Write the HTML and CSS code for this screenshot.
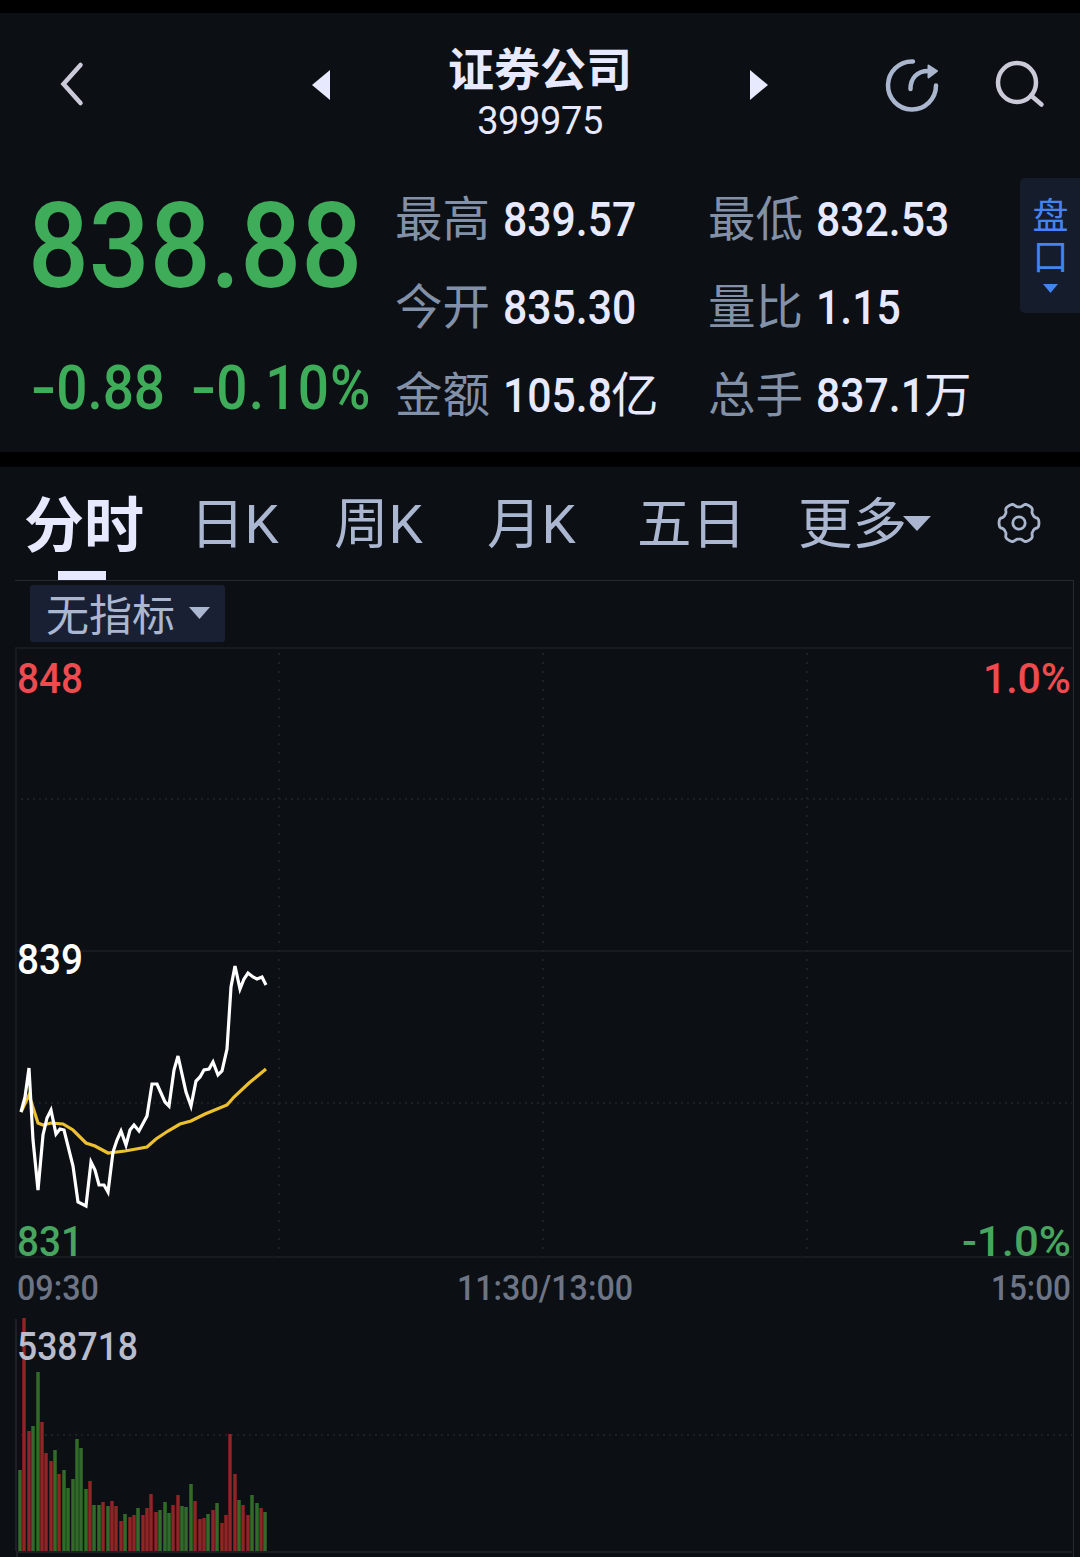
FILE: index.html
```
<!DOCTYPE html>
<html lang="zh-CN">
<head>
    <meta charset="UTF-8">
    <meta name="viewport" content="width=device-width, initial-scale=1.0">
    <title>证券公司 399975</title>
    <link rel="stylesheet" href="styles.css">
</head>
<body>
    <header class="topbar">
        <svg class="back" width="24" height="44" viewBox="0 0 24 44"><path d="M20.500 2L3.500 21L20.500 40"/></svg>
        <svg class="prev" width="18" height="30" viewBox="0 0 18 30"><path d="M18 0V30L0 15Z"/></svg>
        <div class="name">
            <h1>证券公司</h1>
            <span class="code">399975</span>
        </div>
        <svg class="next" width="18" height="30" viewBox="0 0 18 30"><path d="M0 0V30L18 15Z"/></svg>
        <svg class="share" width="56" height="56" viewBox="0 0 56 56">
            <path d="M29 4.500A24 24 0 1 0 52 28.500"/>
            <path d="M26.500 32C26.500 21.500 33 14 44 14"/>
            <path class="tip" d="M44.500 8.500L53 14L44.500 20.500Z"/>
        </svg>
        <svg class="search" width="50" height="50" viewBox="0 0 50 50">
            <ellipse cx="23" cy="22.500" rx="19" ry="19.500"/>
            <path d="M37 35.500L47.500 44.500"/>
        </svg>
    </header>

    <section class="quote">
        <div class="price">
            <div class="last"><span class="num">838.88</span></div>
            <div class="change">
                <span class="num diff"><span class="sign">-</span>0.88</span>
                <span class="num pct"><span class="sign">-</span>0.10%</span>
            </div>
        </div>
        <dl class="stats">
            <div><dt>最高</dt><dd><span class="num">839.57</span></dd></div>
            <div><dt>最低</dt><dd><span class="num">832.53</span></dd></div>
            <div><dt>今开</dt><dd><span class="num">835.30</span></dd></div>
            <div><dt>量比</dt><dd><span class="num">1.15</span></dd></div>
            <div><dt>金额</dt><dd><span class="num">105.8</span>亿</dd></div>
            <div><dt>总手</dt><dd><span class="num">837.1</span>万</dd></div>
        </dl>
        <div class="orders">
            <span>盘口</span>
            <svg width="15" height="9" viewBox="0 0 15 9"><path d="M0 0H15L7.500 9Z"/></svg>
        </div>
    </section>

    <nav class="tabs">
        <a class="active">分时</a>
        <a>日K</a>
        <a>周K</a>
        <a>月K</a>
        <a>五日</a>
        <a class="more">更多<svg width="28" height="15" viewBox="0 0 28 15"><path d="M0 0H28L14 15Z"/></svg></a>
        <svg class="gear" width="44" height="44" viewBox="-22 -22 44 44">
            <path id="gear"/>
            <circle r="6.200"/>
        </svg>
    </nav>

    <main class="panel">
        <div class="indicator">
            <button>无指标<svg width="21" height="12" viewBox="0 0 21 12"><path d="M0 0H21L10.500 12Z"/></svg></button>
        </div>
        <svg class="chart" width="1058" height="911" viewBox="15 646 1058 911">
            <g class="frame">
                <path d="M1072 648H16V1257H1072M16 951H1072"/>
                <path class="strong" d="M16 1319V1551M16 1552H1072M17 1553V1557"/>
            </g>
            <g class="dots">
                <path class="v" d="M279 653V1257M543 653V1257M807 653V1257"/>
                <path class="h" d="M21 799H1072M21 1103H1072M21 1435H1072"/>
            </g>
            <g id="volume"></g>
            <path class="average" d="M21 1112L29 1095L38 1123L43 1125L51 1123L63 1124L73 1130L86 1143L95 1146L108 1153L125 1151L147 1147L156 1139L168 1131L180 1124L191 1121L205 1114L227 1105L234 1097L249 1083L266 1069"/>
            <path class="line" d="M21 1112L25 1097L29 1068L33 1140L38 1190L43 1135L47 1118L51 1110L56 1134L60 1129L64 1130L73 1166L78 1202L86 1206L91 1162L95 1170L99 1185L104 1185L108 1192L113 1152L117 1140L121 1131L126 1145L130 1130L134 1125L139 1131L147 1116L152 1084L157 1084L165 1102L169 1106L174 1070L178 1056L186 1092L191 1106L196 1081L200 1077L204 1070L209 1069L213 1062L218 1075L222 1071L227 1049L231 987L235 966L240 989L244 979L248 973L253 977L257 979L262 977L266 985"/>
            <g class="scale">
                <text class="up" x="17" y="692.500" textLength="66" lengthAdjust="spacingAndGlyphs">848</text>
                <text class="up" x="983" y="692.500" textLength="88" lengthAdjust="spacingAndGlyphs">1.0%</text>
                <text class="mid" x="17" y="973.500" textLength="66" lengthAdjust="spacingAndGlyphs">839</text>
                <text class="down" x="17" y="1255.500" textLength="66" lengthAdjust="spacingAndGlyphs">831</text>
                <text class="down" x="962" y="1255.500" textLength="109" lengthAdjust="spacingAndGlyphs">-1.0%</text>
            </g>
            <g class="time">
                <text x="17" y="1300" textLength="82" lengthAdjust="spacingAndGlyphs">09:30</text>
                <text x="457" y="1300" textLength="176" lengthAdjust="spacingAndGlyphs">11:30/13:00</text>
                <text x="991" y="1300" textLength="80" lengthAdjust="spacingAndGlyphs">15:00</text>
            </g>
            <text class="peak" x="17" y="1360" textLength="121" lengthAdjust="spacingAndGlyphs">538718</text>
        </svg>
    </main>

    <script>
        // one entry per minute: bar height, red (r) or green (g)
        var bars = "81g 233r 120r 125g 179g 129r 98r 90r 101g 77r 81g 63g 72g 112g 103g 62g 70r 46g 46g 49r " +
            "45g 50r 45r 30r 37g 34r 36r 43g 36r 43r 57r 39r 41g 49g 38g 46r 56r 45g 44g 67g 50r 32r 33r " +
            "37g 41r 48g 28r 36r 117r 77r 51g 46r 36r 56g 48g 43r 39g";
        var html = "";
        bars.split(" ").forEach(function (bar, i) {
            var h = parseInt(bar);
            var x = Math.round(18 + i * 4.381);
            html += '<rect class="' + bar.slice(-1) + '" x="' + x + '" y="' + (1551 - h) + '" width="4" height="' + h + '"/>';
            html += '<rect class="' + bar.slice(-1) + ' core" x="' + (x + 0.5) + '" y="' + (1551 - h) + '" width="3" height="' + h + '"/>';
        });
        document.getElementById("volume").innerHTML = html;

        // six soft teeth round the settings ring
        var d = "";
        for (var a = 0; a < 360; a += 3) {
            var t = a * Math.PI / 180;
            var r = 18 + 2 * Math.tanh(2 * Math.cos(6 * t) + 0.4);
            d += (a ? "L" : "M") + (r * Math.cos(t)).toFixed(1) + " " + (r * Math.sin(t)).toFixed(1);
        }
        document.getElementById("gear").setAttribute("d", d + "Z");
    </script>
</body>
</html>
```

FILE: styles.css
```
* {
    box-sizing: border-box;
}

body {
    margin: 0;
    height: 1557px;
    overflow: hidden;
    background: #0c0f14;
    color: #e6e9ff;
    font-family: "Noto Sans CJK SC", sans-serif;
}

svg {
    display: block;
    overflow: visible;
    fill: none;
}

.num, .scale, .time, .peak, .code {
    font-family: Roboto, "Noto Sans CJK SC", sans-serif;
}

/* narrow figures */
.num {
    display: inline-block;
    transform: scaleX(0.9);
    transform-origin: left;
    font-weight: 500;
}

.topbar {
    display: grid;
    grid-template-columns: 252px 18px 420px 134px 110px 50px;
    align-items: center;
    height: 157px;
    padding-left: 60px;
    border-top: 13px solid #000;
}

.back, .prev, .next, .share, .search {
    margin-bottom: 1px;
}

.back, .search {
    stroke: #cbcad8;
    stroke-width: 4.5;
    stroke-linecap: round;
}

.prev, .next {
    fill: #e6e9ff;
}

.name {
    padding-top: 13px;
    text-align: center;
}

.name h1 {
    margin: 0;
    font-size: 46px;
    line-height: 54px;
}

.code {
    display: block;
    margin-top: 4px;
    font-size: 38px;
    line-height: 48px;
    letter-spacing: -0.4px;
}

.share {
    stroke: #a9b6cd;
    stroke-width: 4.5;
    stroke-linecap: round;
}

.share .tip {
    fill: #a9b6cd;
    stroke-width: 2;
    stroke-linejoin: round;
}

.quote {
    display: flex;
    height: 310px;
    padding-top: 21px;
    border-bottom: 15px solid #000;
}

.price {
    width: 396px;
    padding-left: 28px;
    color: #3fac5a;
    white-space: nowrap;
}

.last {
    height: 128px;
    font-size: 119px;
    line-height: 114px;
}

.change {
    display: flex;
    margin-top: 47px;
    padding-left: 3px;
    font-size: 61px;
    line-height: 70px;
}

.diff {
    width: 160px;
}

.pct {
    letter-spacing: 1.4px;
}

.sign {
    display: inline-block;
    width: 28px;
    transform: scaleX(1.35);
    transform-origin: left;
}

.stats {
    display: grid;
    grid-template-columns: 313px 311px;
    grid-template-rows: 88px 88px 88px;
    margin: -6px 0 0 -1px;
    font-size: 47.5px;
    line-height: 88px;
    white-space: nowrap;
}

.stats div {
    display: flex;
}

.stats dt {
    width: 108px;
    color: #8291a8;
}

.stats dd {
    margin: 0;
}

.stats .num {
    margin-right: -0.3em;
    transform: scaleX(0.89);
    font-size: 48px;
}

.orders {
    display: flex;
    flex-direction: column;
    align-items: center;
    width: 60px;
    height: 135px;
    margin-left: 1px;
    padding-top: 19px;
    border-radius: 5px 0 0 5px;
    background: #151c2b;
    color: #4384ee;
    font-size: 36px;
    line-height: 41px;
}

.orders span {
    height: 82px;
    writing-mode: vertical-rl;
    letter-spacing: 5px;
}

.orders svg {
    margin-top: 5px;
    fill: #4384ee;
}

.tabs {
    display: grid;
    grid-template-columns: 166px 144px 153px 150px 161px 200px 44px;
    grid-template-rows: 113px;
    height: 113px;
    padding-left: 24px;
    color: #abb7d0;
    font-family: Roboto, "Noto Sans CJK SC", sans-serif;
    font-size: 54.5px;
    line-height: 115px;
    white-space: nowrap;
}

.active {
    color: #e6e9ff;
    font-family: "Noto Sans CJK SC", sans-serif;
    font-size: 60px;
    font-weight: 700;
    line-height: 107px;
}

.active::after {
    content: "";
    display: block;
    width: 48px;
    height: 9px;
    margin: -3px 0 0 34px;
    background: #e6e9ff;
}

.more {
    display: flex;
    align-items: flex-start;
}

.more svg {
    margin: 49px 0 0 -4px;
    fill: #abb7d0;
}

.gear {
    margin: 34px 0 0 -1px;
    stroke: #a9b6cd;
    stroke-width: 2.8;
}

.panel {
    width: 1059px;
    margin-left: 15px;
    border-top: 1px solid #262a30;
    border-right: 1px solid #262a30;
}

.indicator {
    height: 65px;
    padding: 4px 0 0 15px;
}

.indicator button {
    display: flex;
    align-items: center;
    gap: 14px;
    width: 195px;
    height: 57px;
    padding: 0 0 2px 16px;
    border: 0;
    border-radius: 3px;
    background: #1a2033;
    color: #abb7d0;
    font-family: inherit;
    font-size: 43px;
    line-height: 55px;
}

.indicator svg {
    fill: #abb7d0;
}

.frame {
    stroke: #171b20;
    stroke-width: 2;
}

.frame .strong {
    stroke: #1d2127;
}

.dots {
    stroke: #1d2127;
    stroke-width: 2;
}

.dots .v {
    stroke-dasharray: 2 7;
}

.dots .h {
    stroke-dasharray: 2 4;
}

.line, .average {
    stroke: #fff;
    stroke-width: 3.2;
}

.average {
    stroke: #edc02f;
}

.r {
    fill: #5d0f12;
}

.g {
    fill: #184415;
}

.r.core {
    fill: #8c2628;
}

.g.core {
    fill: #33692a;
}

.scale {
    font-size: 43px;
    font-weight: 500;
}

.up {
    fill: #ee4b50;
}

.mid {
    fill: #fff;
}

.down {
    fill: #47a55f;
}

.time {
    fill: #6d7585;
    font-size: 35px;
    font-weight: 500;
}

.peak {
    fill: #b9bccb;
    font-size: 39px;
    font-weight: 500;
}
```
